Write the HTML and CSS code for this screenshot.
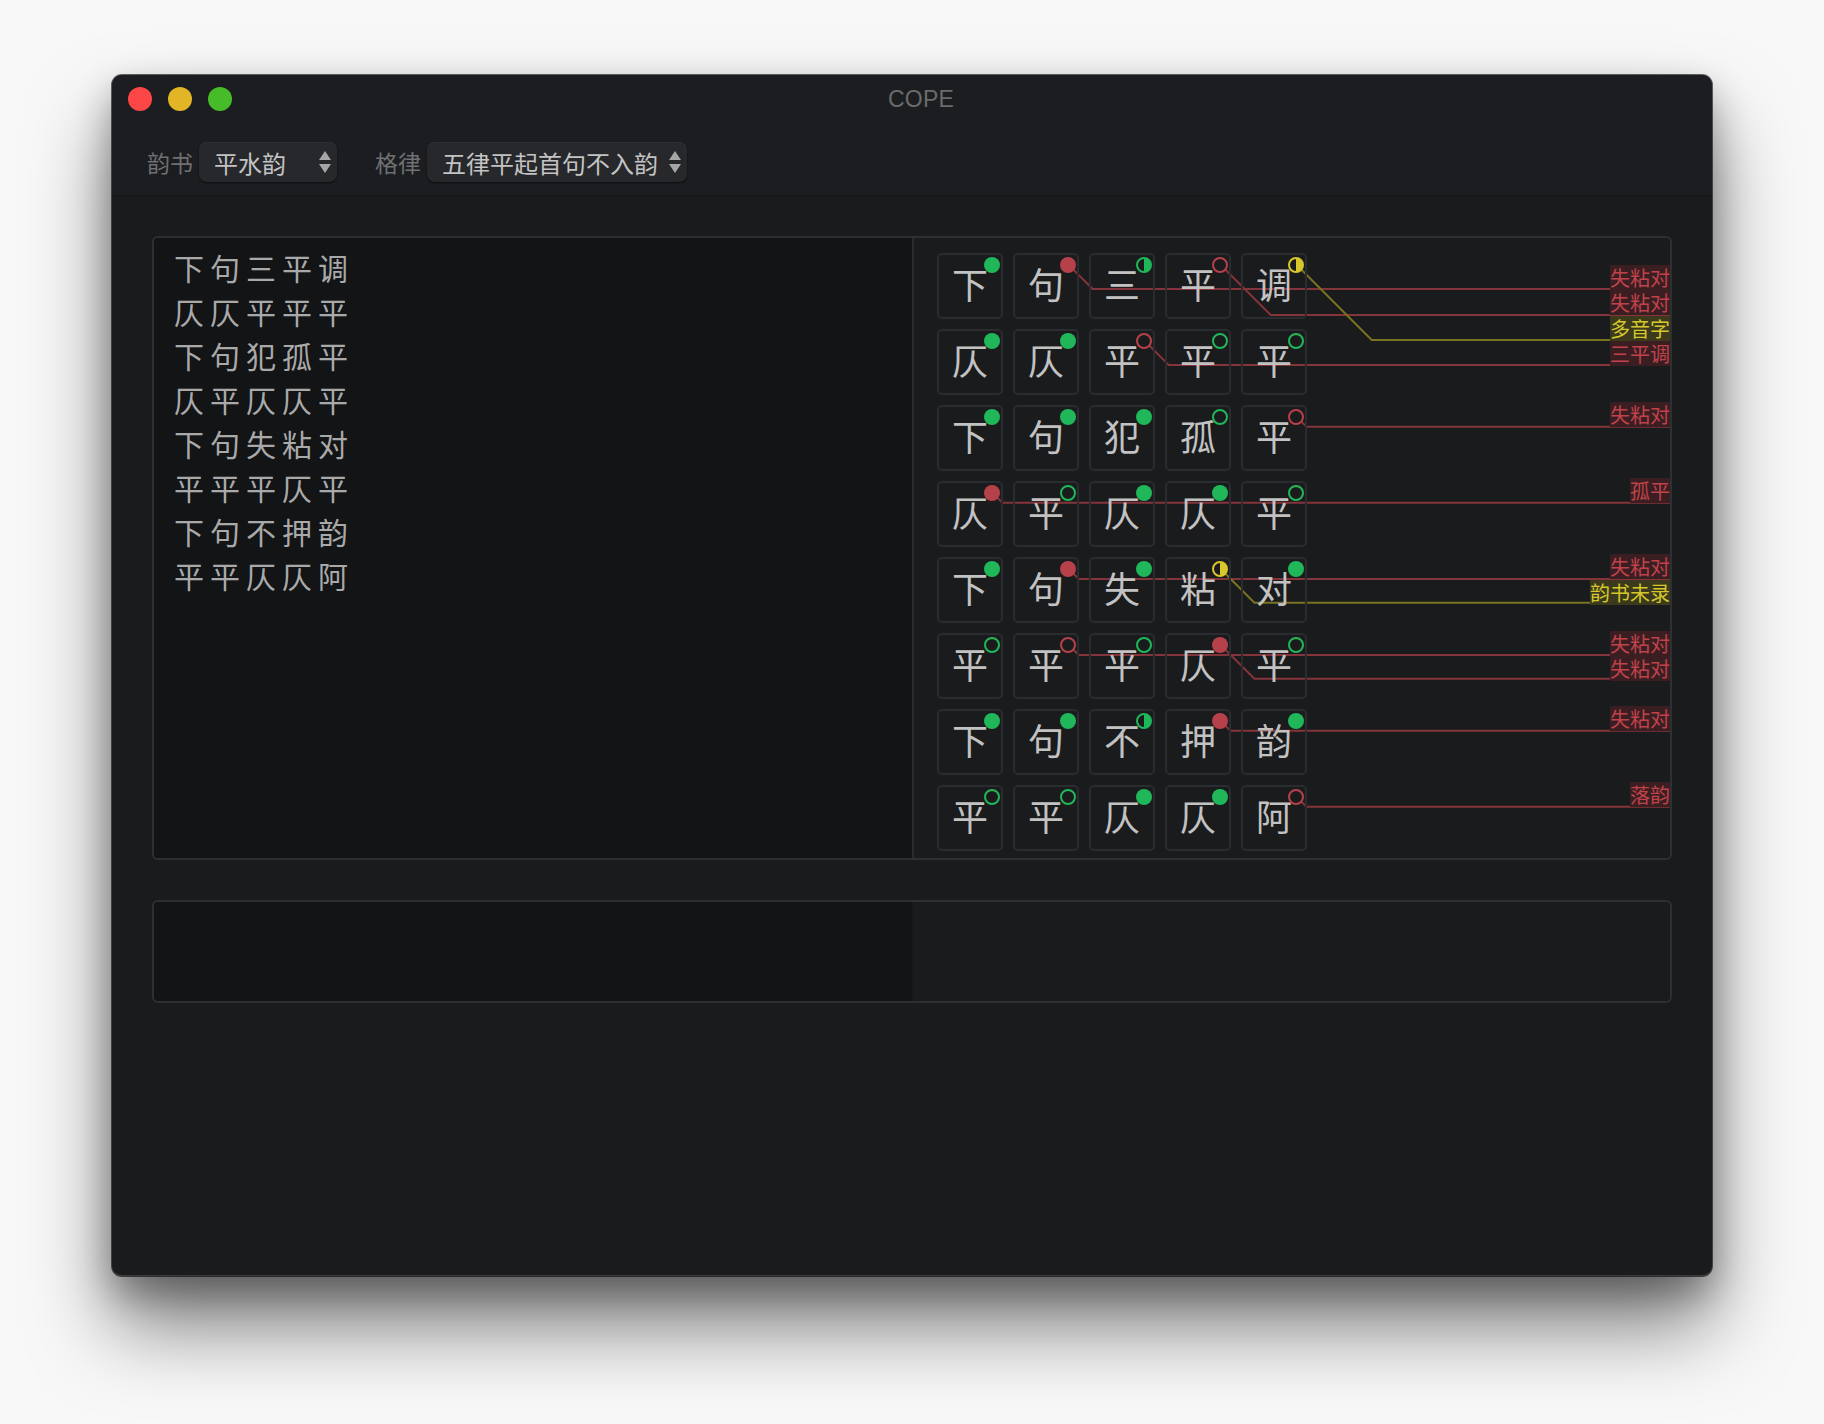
FILE: index.html
```html
<!DOCTYPE html>
<html lang="zh">
<head>
<meta charset="utf-8">
<title>COPE</title>
<link rel="stylesheet" href="styles.css">
</head>
<body>
<div class="stage">
  <div class="window">
    <header class="header">
      <div class="titlebar">
        <div class="lights">
          <span class="light red"></span>
          <span class="light yellow"></span>
          <span class="light green"></span>
        </div>
        <div class="title">COPE</div>
        <div></div>
      </div>
      <div class="toolbar">
        <span class="tlabel">韵书</span>
        <div class="popup p1"><span>平水韵</span>
          <svg class="arrows" viewBox="0 0 12 22" width="12" height="22"><path d="M6 0 L12 9 L0 9 Z M0 13 L12 13 L6 22 Z" fill="#a6a6a6"/></svg>
        </div>
        <span class="tlabel l2">格律</span>
        <div class="popup p2"><span>五律平起首句不入韵</span>
          <svg class="arrows" viewBox="0 0 12 22" width="12" height="22"><path d="M6 0 L12 9 L0 9 Z M0 13 L12 13 L6 22 Z" fill="#a6a6a6"/></svg>
        </div>
      </div>
    </header>
    <main class="content">
      <section class="panel main-panel">
        <div class="editor">下句三平调<br>仄仄平平平<br>下句犯孤平<br>仄平仄仄平<br>下句失粘对<br>平平平仄平<br>下句不押韵<br>平平仄仄阿</div>
        <div class="analysis">
          <svg class="links" width="756" height="620" viewBox="0 0 756 620">
            <g fill="none" stroke-width="2">
              <polyline class="lr" points="153.7,26 178.7,51 756,51"/>
              <polyline class="lr" points="305.7,26 356.7,77 756,77"/>
              <polyline class="ly" points="381.7,26 457.7,102 756,102"/>
              <polyline class="lr" points="229.7,102 254.7,127 756,127"/>
              <polyline class="lr" points="381.7,178 392.4,188.7 756,188.7"/>
              <polyline class="lr" points="77.7,254 88.4,264.7 756,264.7"/>
              <polyline class="lr" points="153.7,330 164.7,341 756,341"/>
              <polyline class="ly" points="305.7,330 340.4,364.7 756,364.7"/>
              <polyline class="lr" points="153.7,406 164.7,417 756,417"/>
              <polyline class="lr" points="305.7,406 340.4,440.7 756,440.7"/>
              <polyline class="lr" points="305.7,482 316.4,492.7 756,492.7"/>
              <polyline class="lr" points="381.7,558 392.4,568.7 756,568.7"/>
            </g>
          </svg>
          <div class="tag r" style="top:26.5px">失粘对</div>
          <div class="tag r" style="top:52px">失粘对</div>
          <div class="tag y" style="top:77.5px">多音字</div>
          <div class="tag r" style="top:103px">三平调</div>
          <div class="tag r" style="top:164px">失粘对</div>
          <div class="tag r" style="top:240px">孤平</div>
          <div class="tag r" style="top:316px">失粘对</div>
          <div class="tag y" style="top:341.5px">韵书未录</div>
          <div class="tag r" style="top:392.5px">失粘对</div>
          <div class="tag r" style="top:418px">失粘对</div>
          <div class="tag r" style="top:468px">失粘对</div>
          <div class="tag r" style="top:544px">落韵</div>

          <div class="grid">
            <div class="cell">下<i class="dot f g"></i></div>
            <div class="cell">句<i class="dot f r"></i></div>
            <div class="cell">三<i class="dot h g"></i></div>
            <div class="cell">平<i class="dot o r"></i></div>
            <div class="cell">调<i class="dot h y"></i></div>

            <div class="cell">仄<i class="dot f g"></i></div>
            <div class="cell">仄<i class="dot f g"></i></div>
            <div class="cell">平<i class="dot o r"></i></div>
            <div class="cell">平<i class="dot o g"></i></div>
            <div class="cell">平<i class="dot o g"></i></div>

            <div class="cell">下<i class="dot f g"></i></div>
            <div class="cell">句<i class="dot f g"></i></div>
            <div class="cell">犯<i class="dot f g"></i></div>
            <div class="cell">孤<i class="dot o g"></i></div>
            <div class="cell">平<i class="dot o r"></i></div>

            <div class="cell">仄<i class="dot f r"></i></div>
            <div class="cell">平<i class="dot o g"></i></div>
            <div class="cell">仄<i class="dot f g"></i></div>
            <div class="cell">仄<i class="dot f g"></i></div>
            <div class="cell">平<i class="dot o g"></i></div>

            <div class="cell">下<i class="dot f g"></i></div>
            <div class="cell">句<i class="dot f r"></i></div>
            <div class="cell">失<i class="dot f g"></i></div>
            <div class="cell">粘<i class="dot h y"></i></div>
            <div class="cell">对<i class="dot f g"></i></div>

            <div class="cell">平<i class="dot o g"></i></div>
            <div class="cell">平<i class="dot o r"></i></div>
            <div class="cell">平<i class="dot o g"></i></div>
            <div class="cell">仄<i class="dot f r"></i></div>
            <div class="cell">平<i class="dot o g"></i></div>

            <div class="cell">下<i class="dot f g"></i></div>
            <div class="cell">句<i class="dot f g"></i></div>
            <div class="cell">不<i class="dot h g"></i></div>
            <div class="cell">押<i class="dot f r"></i></div>
            <div class="cell">韵<i class="dot f g"></i></div>

            <div class="cell">平<i class="dot o g"></i></div>
            <div class="cell">平<i class="dot o g"></i></div>
            <div class="cell">仄<i class="dot f g"></i></div>
            <div class="cell">仄<i class="dot f g"></i></div>
            <div class="cell">阿<i class="dot o r"></i></div>
          </div>
        </div>
      </section>
      <section class="panel sub-panel">
        <div class="editor"></div>
        <div class="analysis"></div>
      </section>
    </main>
  </div>
</div>
</body>
</html>
```

FILE: styles.css
```css
html, body {
  margin: 0;
  padding: 0;
}
body {
  background: #f8f8f8;
  font-family: "Noto Sans CJK SC", "Noto Sans", sans-serif;
  overflow: hidden;
}
.stage {
  width: 1824px;
  height: 1424px;
  box-sizing: border-box;
  padding: 75px 0 0 112px;
}
.window {
  width: 1600px;
  height: 1201px;
  box-sizing: border-box;
  background: #1a1b1d;
  border-radius: 10px;
  border-bottom: 1px solid #3a3b3e;
  overflow: hidden;
  display: flex;
  flex-direction: column;
  box-shadow: 0 0 0 1px rgba(0, 0, 0, 0.6),
              0 50px 80px rgba(0, 0, 0, 0.5),
              0 16px 36px rgba(0, 0, 0, 0.3);
}
.header {
  background: #1c1d20;
  border-bottom: 1px solid #151618;
}
.titlebar {
  height: 48px;
  display: grid;
  grid-template-columns: 1fr auto 1fr;
  align-items: center;
}
.lights {
  display: flex;
  gap: 16px;
  padding-left: 16px;
  padding-bottom: 1px;
}
.light {
  width: 24px;
  height: 24px;
  border-radius: 50%;
  display: block;
}
.light.red { background: #fd4746; }
.light.yellow { background: #e1b526; }
.light.green { background: #46bc29; }
.title {
  font-family: "Liberation Sans", Arial, sans-serif;
  font-size: 23px;
  color: #6a6b6d;
  padding-left: 18px;
  letter-spacing: 0.2px;
}
.toolbar {
  height: 72px;
  box-sizing: border-box;
  padding: 19px 0 0 35px;
  display: flex;
  align-items: flex-start;
}
.tlabel {
  font-size: 23px;
  line-height: 40px;
  color: #6f7072;
  margin-right: 6px;
}
.tlabel.l2 {
  margin-left: 38px;
}
.popup {
  height: 40px;
  box-sizing: border-box;
  background: #27282b;
  border-radius: 8px;
  box-shadow: 0 1px 2px rgba(0, 0, 0, 0.6), inset 0 1px 0 #2e2f32;
  display: flex;
  align-items: center;
  justify-content: space-between;
  padding: 0 6px 0 15px;
  font-size: 24px;
  color: #c3c3c3;
}
.popup.p1 { width: 138px; }
.popup.p2 { width: 260px; }
.arrows { display: block; flex: none; }
.content {
  padding: 40px 40px 0 40px;
  display: flex;
  flex-direction: column;
  gap: 40px;
}
.panel {
  border: 2px solid #2e2f32;
  border-radius: 6px;
  display: grid;
  grid-template-columns: 760px 1fr;
  overflow: hidden;
  box-sizing: border-box;
}
.main-panel { height: 624px; }
.sub-panel { height: 103px; }
.editor {
  background: #121416;
  border-right: 2px solid #2a2b2e;
  padding: 7px 20px;
  font-size: 30px;
  line-height: 44px;
  letter-spacing: 6px;
  color: #a9a9a9;
}
.sub-panel .editor {
  border-right: 2px solid #17181a;
}
.analysis {
  position: relative;
  background: #1a1b1d;
}
.links {
  position: absolute;
  left: 0;
  top: 0;
}
.lr { stroke: #84343a; }
.ly { stroke: #7a7322; }
.tag {
  position: absolute;
  right: 0;
  height: 25px;
  line-height: 25px;
  font-size: 20px;
  white-space: nowrap;
}
.tag.r { background: #3a1e22; color: #c0434b; }
.tag.y { background: #3b3a1c; color: #d6c72c; }
.grid {
  position: relative;
  padding: 15px 0 0 23px;
  display: grid;
  grid-template-columns: repeat(5, 66px);
  grid-auto-rows: 66px;
  gap: 10px;
}
.cell {
  position: relative;
  box-sizing: border-box;
  border: 2px solid #2b2c2f;
  border-radius: 5px;
  display: flex;
  align-items: center;
  justify-content: center;
  font-size: 36px;
  line-height: 1;
  color: #c2c2c2;
  font-style: normal;
  padding-bottom: 6px;
}
.dot {
  position: absolute;
  top: 1.5px;
  right: 1.5px;
  width: 16px;
  height: 16px;
  box-sizing: border-box;
  border-radius: 50%;
}
.dot.f.g { background: #1fb75a; }
.dot.f.r { background: #b6414a; }
.dot.o.g { border: 2.5px solid #1fb75a; background: #1a1b1d; }
.dot.o.r { border: 2.5px solid #b6414a; background: #1a1b1d; }
.dot.h.g { border: 2.5px solid #1fb75a; background: linear-gradient(to right, #1a1b1d 50%, #1fb75a 50%); }
.dot.h.y { border: 2.5px solid #d8c62a; background: linear-gradient(to right, #1a1b1d 50%, #d8c62a 50%); }
```
